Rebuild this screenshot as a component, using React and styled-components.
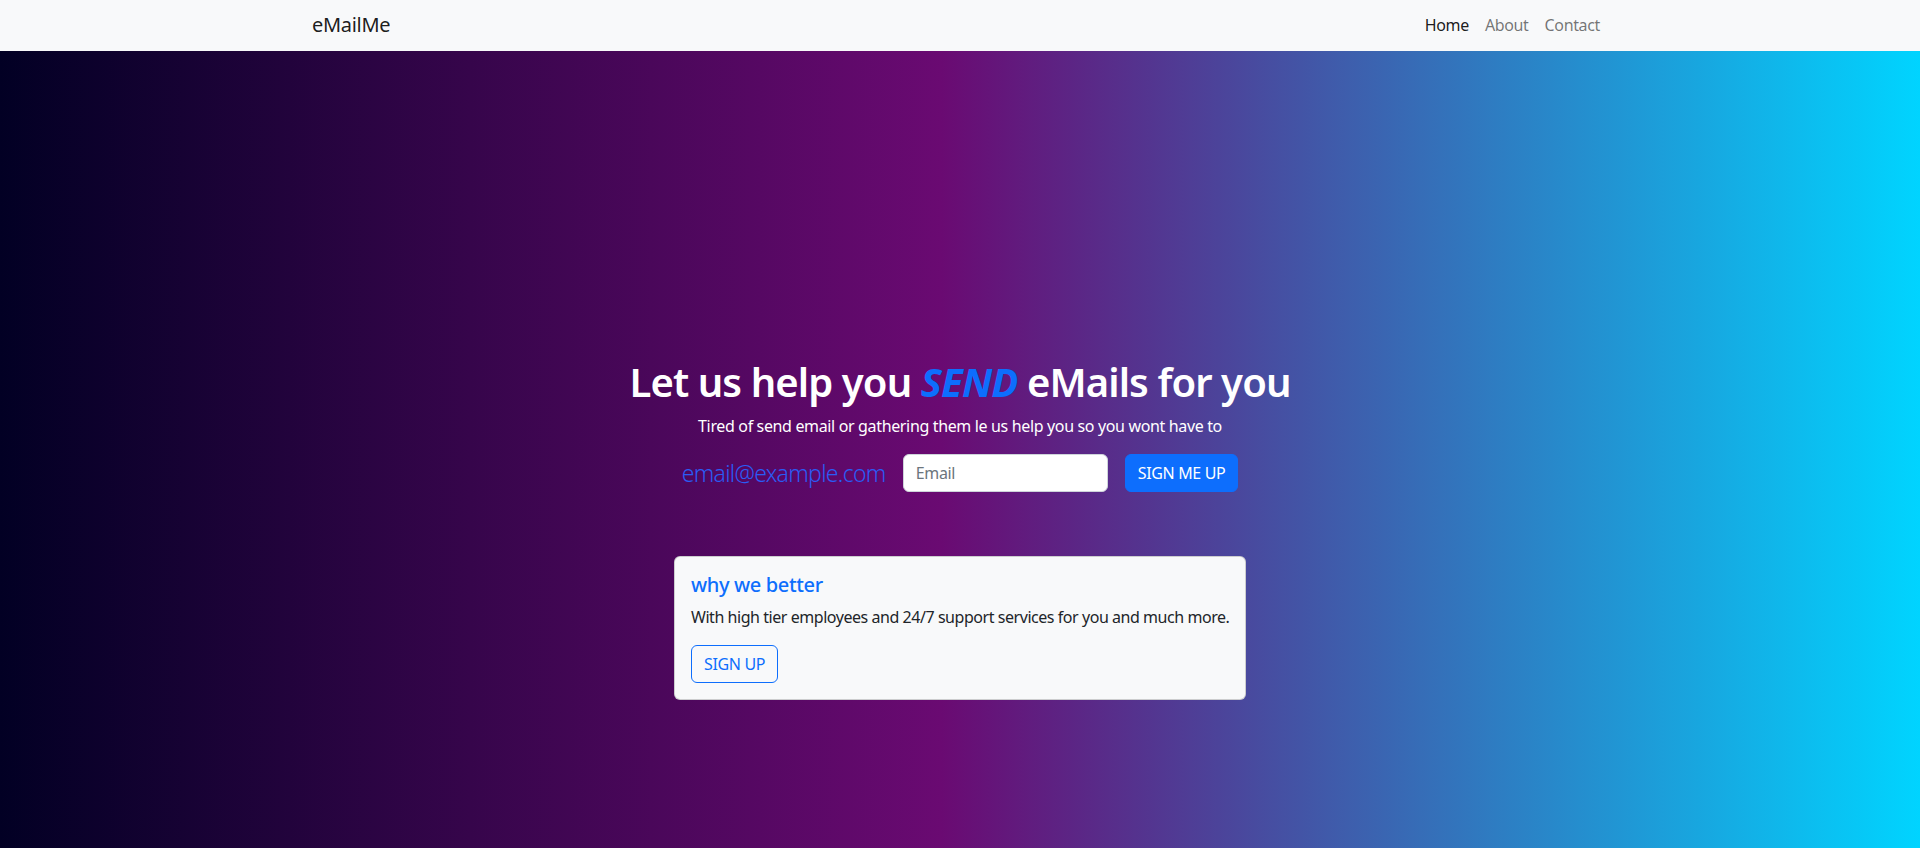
import styled, { createGlobalStyle } from 'styled-components';

const GlobalStyle = createGlobalStyle`
  * {
    box-sizing: border-box;
  }

  body {
    margin: 0;
    font-family: 'Segoe UI', 'Noto Sans', 'Liberation Sans', sans-serif;
    font-size: 16px;
    line-height: 1.5;
    letter-spacing: -0.35px;
    color: #212529;
    background: #fff;
  }
`;

export default function App() {
  return (
    <>
      <GlobalStyle />
      <Navbar>
        <NavContainer>
          <Brand href="#">eMailMe</Brand>
          <NavLinks>
            <NavLink href="#" $active>
              Home
            </NavLink>
            <NavLink href="#">About</NavLink>
            <NavLink href="#">Contact</NavLink>
          </NavLinks>
        </NavContainer>
      </Navbar>
      <Hero>
        <Heading>
          Let us help you <Send>SEND</Send> eMails for you
        </Heading>
        <Lead>Tired of send email or gathering them le us help you so you wont have to</Lead>
        <SignupRow>
          <EmailLabel>email@example.com</EmailLabel>
          <EmailInput type="email" placeholder="Email" />
          <PrimaryBtn>SIGN ME UP</PrimaryBtn>
        </SignupRow>
        <Card>
          <CardTitle>why we better</CardTitle>
          <CardText>With high tier employees and 24/7 support services for you and much more.</CardText>
          <OutlineBtn>SIGN UP</OutlineBtn>
        </Card>
      </Hero>
    </>
  );
}

const Navbar = styled.nav`
  height: 51px;
  background: #f8f9fa;
  display: flex;
  align-items: center;
`;

const NavContainer = styled.div`
  width: 1320px;
  margin: 0 auto;
  padding: 0 12px;

  display: flex;
  align-items: center;
  justify-content: space-between;
`;

const Brand = styled.a`
  margin-top: -2px;
  font-size: 20px;
  line-height: 30px;
  letter-spacing: -0.3px;
  color: rgba(0, 0, 0, 0.9);
  text-decoration: none;
`;

const NavLinks = styled.div`
  margin-top: -2px;
  display: flex;
`;

const NavLink = styled.a`
  padding: 8px;
  font-size: 16px;
  line-height: 24px;
  color: ${(p) => (p.$active ? 'rgba(0, 0, 0, 0.9)' : 'rgba(0, 0, 0, 0.55)')};
  text-decoration: none;
`;

const Hero = styled.section`
  height: 797px;
  padding-top: 307px;
  background: linear-gradient(
    90deg,
    #020024 0%,
    #6a0a72 49%,
    #00d4ff 100%
  );

  display: flex;
  flex-direction: column;
  align-items: center;
`;

const Heading = styled.h1`
  margin: 0 0 8px;
  font-size: 40px;
  font-weight: 600;
  line-height: 48px;
  letter-spacing: -0.9px;
  color: #fff;
`;

const Send = styled.i`
  font-weight: 700;
  color: #0d6efd;
`;

const Lead = styled.p`
  margin: 0 0 16px;
  font-size: 16px;
  line-height: 24px;
  color: #fff;
`;

const SignupRow = styled.div`
  display: flex;
  align-items: center;
  gap: 17px;
`;

const EmailLabel = styled.span`
  font-size: 23px;
  font-weight: 300;
  line-height: 30px;
  letter-spacing: -0.7px;
  color: #2a5cf5;
`;

const EmailInput = styled.input`
  width: 205px;
  height: 38px;
  padding: 6px 12px;
  border: 1px solid #ced4da;
  border-radius: 6px;

  font-family: inherit;
  font-size: 16px;
  letter-spacing: inherit;
  color: #212529;
  background: #fff;

  &::placeholder {
    color: #6c757d;
  }
`;

const PrimaryBtn = styled.button`
  height: 38px;
  padding: 6px 12px;
  border: 1px solid #0d6efd;
  border-radius: 6px;

  font-family: inherit;
  font-size: 16px;
  letter-spacing: inherit;
  color: #fff;
  background: #0d6efd;
`;

const Card = styled.div`
  width: 572px;
  margin-top: 64px;
  padding: 16px;
  border: 1px solid rgba(0, 0, 0, 0.175);
  border-radius: 6px;
  background: #f8f9fa;
`;

const CardTitle = styled.h5`
  margin: 0 0 8px;
  font-size: 20px;
  font-weight: 500;
  line-height: 24px;
  color: #0d6efd;
`;

const CardText = styled.p`
  margin: 0 0 16px;
  font-size: 16px;
  line-height: 24px;
  letter-spacing: -0.45px;
  white-space: nowrap;
  color: #212529;
`;

const OutlineBtn = styled.button`
  height: 38px;
  padding: 6px 12px;
  border: 1px solid #0d6efd;
  border-radius: 6px;

  font-family: inherit;
  font-size: 16px;
  letter-spacing: inherit;
  color: #0d6efd;
  background: transparent;
`;
